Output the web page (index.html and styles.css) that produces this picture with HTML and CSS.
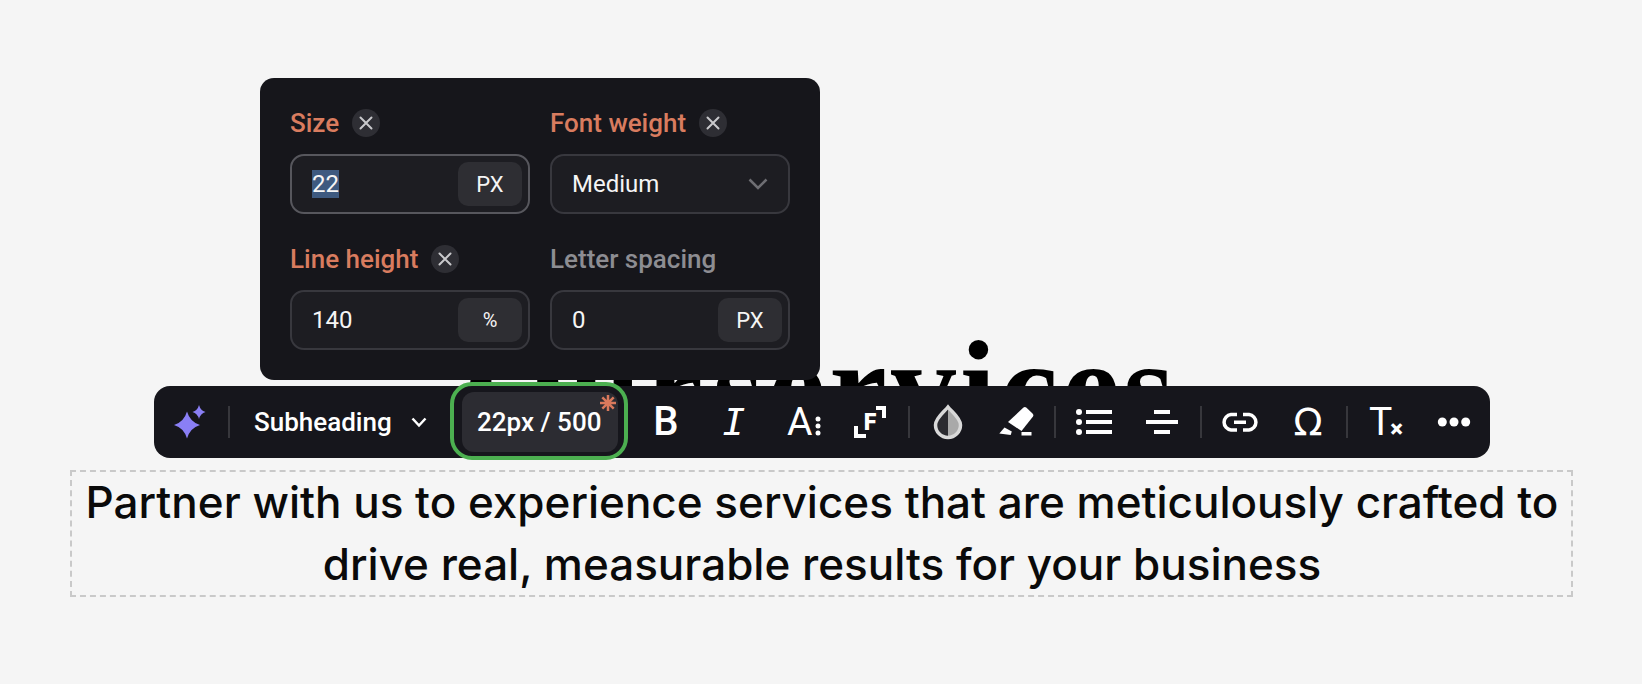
FILE: index.html
```html
<!DOCTYPE html>
<html lang="en">
<head>
<meta charset="utf-8">
<title>Text editor</title>
<link rel="stylesheet" href="styles.css">
</head>
<body>
<main class="page">
  <h1 class="heading">Our services</h1>
  <p class="subtext">Partner with us to experience services that are meticulously crafted to drive real, measurable results for your business</p>
</main>

<section class="panel">
  <div class="cell">
    <div class="label-row"><span class="label changed">Size</span><span class="clear"><svg viewBox="0 0 28 28"><path d="M8.5 8.5l11 11M19.500 8.500l-11 11"/></svg></span></div>
    <div class="field focus"><span class="value"><span class="selected">22</span></span><span class="unit">PX</span></div>
  </div>
  <div class="cell">
    <div class="label-row"><span class="label changed">Font weight</span><span class="clear"><svg viewBox="0 0 28 28"><path d="M8.5 8.5l11 11M19.500 8.500l-11 11"/></svg></span></div>
    <div class="field select"><span class="value">Medium</span><svg class="caret" viewBox="0 0 20 12"><path d="M1.500 1.500l8.500 8.500l8.500-8.500"/></svg></div>
  </div>
  <div class="cell">
    <div class="label-row"><span class="label changed">Line height</span><span class="clear"><svg viewBox="0 0 28 28"><path d="M8.5 8.5l11 11M19.500 8.500l-11 11"/></svg></span></div>
    <div class="field"><span class="value">140</span><span class="unit small">%</span></div>
  </div>
  <div class="cell">
    <div class="label-row"><span class="label">Letter spacing</span></div>
    <div class="field"><span class="value">0</span><span class="unit">PX</span></div>
  </div>
</section>

<nav class="toolbar">
  <span class="btn"><svg class="icon" viewBox="0 0 48 48"><path class="star" d="M21 13.500Q24 24 34 27Q24 30 21 40.500Q18 30 8 27Q18 24 21 13.500Z"/><path class="star" d="M33 7Q34.500 12.500 39.500 14Q34.500 15.500 33 21Q31.500 15.500 26.500 14Q31.500 12.500 33 7Z"/></svg></span>
  <span class="divider"></span>
  <span class="style-select">Subheading<svg class="chev" viewBox="0 0 16 11"><path d="M1.500 1.500l6.500 7l6.500-7"/></svg></span>
  <span class="size-chip">22px / 500<svg class="asterisk" viewBox="0 0 16 16"><path d="M8 0v16M0 8h16M2.300 2.300l11.400 11.400M13.700 2.300l-11.400 11.400"/></svg></span>
  <div class="group">
    <span class="btn glyph bold">B</span>
    <span class="btn glyph italic">I</span>
    <span class="btn glyph case">A<svg class="case-dots" viewBox="0 0 6 20"><circle cx="3" cy="3" r="2.500"/><circle cx="3" cy="10" r="2.500"/><circle cx="3" cy="17" r="2.500"/></svg></span>
    <span class="btn glyph frame"><svg class="icon frame-corners" viewBox="0 0 48 48"><path d="M30 10H38V20M10 28V38H20"/></svg>F</span>
  </div>
  <span class="divider"></span>
  <div class="group">
    <span class="btn"><svg class="icon" viewBox="0 0 48 48"><path class="drop-dark" d="M24 9C28 14 36.500 20 36.500 27A12.500 12.500 0 0 1 11.500 27C11.500 20 20 14 24 9Z"/><path class="drop-light" d="M24 9C28 14 36.500 20 36.500 27A12.500 12.500 0 0 1 24 39.500Z"/><path class="drop-line" d="M24 9C28 14 36.500 20 36.500 27A12.500 12.500 0 0 1 11.500 27C11.500 20 20 14 24 9Z"/></svg></span>
    <span class="btn"><svg class="icon" viewBox="0 0 48 48"><path class="solid" d="M31.500 9.500Q33 8.500 34.500 9.800L40.500 15.500Q42 17 41 18.500L29.500 33L16 24Z"/><path class="solid" d="M12.500 29.500L19.800 33.500L18.700 37L7.300 35.500Z"/><rect class="solid" x="29.500" y="34" width="10" height="3.500"/></svg></span>
  </div>
  <span class="divider"></span>
  <div class="group">
    <span class="btn"><svg class="icon" viewBox="0 0 48 48"><circle class="solid" cx="9" cy="14" r="3"/><circle class="solid" cx="9" cy="24" r="3"/><circle class="solid" cx="9" cy="34" r="3"/><rect class="solid" x="16" y="12" width="26" height="4"/><rect class="solid" x="16" y="22" width="26" height="4"/><rect class="solid" x="16" y="32" width="26" height="4"/></svg></span>
    <span class="btn"><svg class="icon" viewBox="0 0 48 48"><rect class="solid" x="16" y="12" width="16" height="4"/><rect class="solid" x="8" y="22" width="32" height="4"/><rect class="solid" x="16" y="32" width="16" height="4"/></svg></span>
  </div>
  <span class="divider"></span>
  <div class="group">
    <span class="btn"><svg class="icon link" viewBox="0 0 48 48"><path d="M21 16.500H15A7.800 7.800 0 0 0 15 32H21M27 16.500H33A7.800 7.800 0 0 1 33 32H27M18 24.300H30"/></svg></span>
    <span class="btn glyph omega">Ω</span>
  </div>
  <span class="divider"></span>
  <div class="group">
    <span class="btn glyph clear-format">T<span class="clear-x">×</span></span>
    <span class="btn"><svg class="icon" viewBox="0 0 48 48"><circle class="solid" cx="12.300" cy="24" r="4.500"/><circle class="solid" cx="24" cy="24" r="4.500"/><circle class="solid" cx="35.700" cy="24" r="4.500"/></svg></span>
  </div>
</nav>
</body>
</html>
```
FILE: styles.css
```css
* { box-sizing: border-box; }

html, body { margin: 0; height: 684px; overflow: hidden; }

body {
  background: #f5f5f5;
  color: #0a0a0a;
  font-family: "Roboto", "Liberation Sans", sans-serif;
  position: relative;
}

.page {
  display: flex;
  flex-direction: column;
  align-items: center;
  padding-top: 308px;
}

.heading {
  margin: 0;
  font: 700 130px/156px "Liberation Serif", serif;
  letter-spacing: 4px;
  word-spacing: -28px;
  color: #000;
  white-space: nowrap;
}

.subtext {
  margin: 6px 0 0;
  width: 1503px;
  border: 2px dashed #c9c9c9;
  padding: 0 8px 0 10px;
  text-align: center;
  font: 500 44px/61.6px "Inter", sans-serif;
  color: #0a0a0a;
}

/* floating panel */
.panel {
  position: absolute;
  left: 260px;
  top: 78px;
  width: 560px;
  height: 302px;
  padding: 30px;
  background: #16161b;
  border-radius: 14px;
  display: grid;
  grid-template-columns: 240px 240px;
  column-gap: 20px;
  row-gap: 30px;
  align-content: start;
}

.cell { display: flex; flex-direction: column; gap: 16px; }

.label-row { display: flex; align-items: center; gap: 13px; height: 30px; }

.label { font-size: 26px; font-weight: 500; color: #8d8d92; }
.label.changed { color: #d97c5f; }

.clear {
  width: 28px;
  height: 28px;
  border-radius: 50%;
  background: #2e2e34;
  display: flex;
}
.clear svg { width: 28px; height: 28px; fill: none; stroke: #c9c9cc; stroke-width: 2; stroke-linecap: round; }

.field {
  height: 60px;
  border: 2px solid #38383e;
  border-radius: 14px;
  background: #1d1d22;
  display: flex;
  align-items: center;
  justify-content: space-between;
  padding: 0 6px 0 20px;
  color: #f5f5f5;
  font-size: 24px;
}
.field.focus { border-color: #57575d; }
.field.select { padding-right: 20px; }

.selected { display: inline-block; background: #3e5a80; line-height: 28px; }

.unit {
  width: 64px;
  height: 44px;
  border-radius: 10px;
  background: #2e2e33;
  display: flex;
  align-items: center;
  justify-content: center;
  font-size: 22px;
}
.unit.small { font-size: 20px; }

.caret { width: 20px; height: 12px; fill: none; stroke: #6e6e73; stroke-width: 2.500; }

/* toolbar */
.toolbar {
  position: absolute;
  left: 154px;
  top: 386px;
  width: 1336px;
  height: 72px;
  padding: 0 12px;
  border-radius: 16px;
  background: #16161c;
  color: #fff;
  display: flex;
  align-items: center;
  gap: 14px;
}

.group { display: flex; gap: 20px; }
.size-chip + .group { margin-left: 10px; }

.btn {
  position: relative;
  flex: none;
  width: 48px;
  height: 48px;
  display: flex;
  align-items: center;
  justify-content: center;
}

.icon { width: 48px; height: 48px; display: block; }
.star { fill: #8a7ff5; }
.solid { fill: #fff; }

.divider { flex: none; width: 2px; height: 32px; background: #37373c; }

.style-select {
  flex: none;
  width: 204px;
  padding-left: 10px;
  display: flex;
  align-items: center;
  gap: 19px;
  font-size: 26px;
  font-weight: 500;
}
.chev { width: 16px; height: 11px; fill: none; stroke: #fff; stroke-width: 2.500; }

.size-chip {
  position: relative;
  flex: none;
  width: 156px;
  height: 60px;
  padding-left: 15px;
  border-radius: 12px;
  background: #2c2c32;
  display: flex;
  align-items: center;
  font-size: 26px;
  font-weight: 500;
  white-space: nowrap;
}
.size-chip::after {
  content: "";
  position: absolute;
  inset: -10px -10px -8px -12px;
  border: 4px solid #4caf50;
  border-radius: 22px;
}
.asterisk {
  position: absolute;
  left: 138px;
  top: 3px;
  width: 16px;
  height: 16px;
  stroke: #d9795c;
  stroke-width: 2.500;
}

.glyph { font-size: 39px; line-height: 48px; color: #fff; }
.bold { font-size: 40px; font-weight: 500; }
.italic { font-family: "DejaVu Sans Mono", monospace; font-style: italic; font-size: 38px; }
.case { justify-content: flex-start; padding-left: 9px; gap: 3px; }
.case-dots { width: 6px; height: 20px; fill: #fff; margin-top: 8px; }
.frame { font-size: 23px; font-weight: 900; padding-top: 2px; }
.frame-corners { position: absolute; left: 0; top: 0; fill: none; stroke: #fff; stroke-width: 4; }

.drop-dark { fill: #2b2b30; }
.drop-light { fill: #a9a9a9; }
.drop-line { fill: none; stroke: #d9d9d9; stroke-width: 3.500; }

.link { fill: none; stroke: #fff; stroke-width: 3.500; }

.omega { font-family: "DejaVu Sans", sans-serif; font-size: 38px; }
.clear-format { justify-content: flex-start; padding-left: 7px; }
.clear-x { font-size: 24px; font-weight: 900; margin-top: 14px; margin-left: -2px; }
```
